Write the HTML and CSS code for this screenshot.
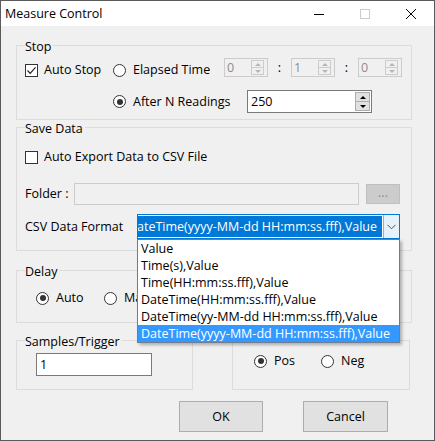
FILE: index.html
```html
<!DOCTYPE html>
<html>
<head>
<meta charset="utf-8">
<title>Measure Control</title>
<link rel="stylesheet" href="styles.css">
</head>
<body>
<div class="window">
  <div class="titlebar">
    <span class="title">Measure Control</span>
    <div class="caption-btns">
      <span class="cap"><svg width="10" height="10" viewBox="0 0 10 10"><path d="M0 5.5H10" stroke="#000" stroke-width="1"/></svg></span>
      <span class="cap"><svg width="10" height="10" viewBox="0 0 10 10"><rect x="0.5" y="0.5" width="9" height="9" fill="none" stroke="#cccccc"/></svg></span>
      <span class="cap"><svg width="10" height="10" viewBox="0 0 10 10"><path d="M0 0L10 10M10 0L0 10" stroke="#000" stroke-width="1"/></svg></span>
    </div>
  </div>

  <div class="client">
    <div class="group stop">
      <div class="legend">Stop</div>
      <div class="row r1">
        <label class="opt w-autostop"><span class="checkbox"><svg width="11" height="11" viewBox="0 0 11 11"><path d="M1.5 5.5L4.2 8.3L9.5 2.3" fill="none" stroke="#222" stroke-width="1.2"/></svg></span>Auto Stop</label>
        <label class="opt w-elapsed"><span class="radio"></span>Elapsed Time</label>
        <div class="spin disabled"><span class="val">0</span><span class="spin-btns"><i class="up"></i><i class="down"></i></span></div>
        <span class="colon">:</span>
        <div class="spin disabled"><span class="val">1</span><span class="spin-btns"><i class="up"></i><i class="down"></i></span></div>
        <span class="colon">:</span>
        <div class="spin disabled"><span class="val">0</span><span class="spin-btns"><i class="up"></i><i class="down"></i></span></div>
      </div>
      <div class="row r2">
        <label class="opt w-after"><span class="radio checked"></span>After N Readings</label>
        <div class="spin big"><span class="val">250</span><span class="spin-btns"><i class="up"></i><i class="down"></i></span></div>
      </div>
    </div>

    <div class="group save">
      <div class="legend">Save Data</div>
      <div class="row r-export">
        <label class="opt"><span class="checkbox empty"></span>Auto Export Data to CSV File</label>
      </div>
      <div class="row r-folder">
        <span class="lbl w-folder">Folder :</span>
        <div class="textbox disabled folder-box"></div>
        <div class="browse">...</div>
      </div>
      <div class="row r-csv">
        <span class="lbl w-csv">CSV Data Format</span>
        <div class="combo">
          <div class="combo-text"><span class="sel">DateTime(yyyy-MM-dd HH:mm:ss.fff),Value</span></div>
          <div class="combo-btn"><svg width="9" height="6" viewBox="0 0 9 6"><path d="M0.5 0.8L4.5 4.8L8.5 0.8" fill="none" stroke="#555" stroke-width="1"/></svg></div>
          <ul class="droplist">
            <li>Value</li>
            <li>Time(s),Value</li>
            <li>Time(HH:mm:ss.fff),Value</li>
            <li>DateTime(HH:mm:ss.fff),Value</li>
            <li>DateTime(yy-MM-dd HH:mm:ss.fff),Value</li>
            <li class="hl">DateTime(yyyy-MM-dd HH:mm:ss.fff),Value</li>
          </ul>
        </div>
      </div>
    </div>

    <div class="group delay">
      <div class="legend">Delay</div>
      <div class="row r-delay">
        <label class="opt w-auto"><span class="radio checked"></span>Auto</label>
        <label class="opt"><span class="radio"></span>Manual</label>
      </div>
    </div>

    <div class="bottom-groups">
      <div class="group samples">
        <div class="legend">Samples/Trigger</div>
        <div class="textbox samples-box">1</div>
      </div>
      <div class="group edge">
        <div class="row r-edge">
          <label class="opt w-pos"><span class="radio checked"></span>Pos</label>
          <label class="opt"><span class="radio"></span>Neg</label>
        </div>
      </div>
    </div>

    <div class="buttons">
      <button class="btn ok">OK</button>
      <button class="btn cancel">Cancel</button>
    </div>
  </div>
</div>
</body>
</html>
```

FILE: styles.css
```css
html, body {
  margin: 0;
  padding: 0;
  background: #f0f0f0;
}
body {
  font-family: "Open Sans", "Noto Sans", sans-serif;
  font-size: 12.5px;
  line-height: 16px;
  color: #000;
}
.window {
  width: 435px;
  height: 441px;
  box-sizing: border-box;
  border: 1px solid #5a5a5a;
  background: #f0f0f0;
  display: flex;
  flex-direction: column;
}
.titlebar {
  height: 25px;
  background: #fff;
  display: flex;
  align-items: center;
  padding-left: 4px;
  flex: none;
}
.title {
  line-height: 16px;
}
.caption-btns {
  margin-left: auto;
  display: flex;
}
.cap {
  width: 46px;
  height: 25px;
  display: flex;
  align-items: center;
  justify-content: center;
}
.client {
  padding: 19px 0 0 15px;
  position: relative;
}
.group {
  box-sizing: border-box;
  width: 396px;
  border: 1px solid #dcdcdc;
  padding: 0 0 0 8px;
}
.legend {
  margin-top: -7px;
  width: fit-content;
  padding: 0 2px 0 0;
  background: #f0f0f0;
  line-height: 16px;
}
.row {
  display: flex;
  align-items: center;
}
.opt {
  display: flex;
  align-items: center;
  white-space: nowrap;
}
.checkbox {
  box-sizing: border-box;
  width: 13px;
  height: 13px;
  border: 1px solid #333;
  background: #fff;
  margin-right: 6px;
  display: flex;
  align-items: center;
  justify-content: center;
  flex: none;
}
.checkbox.empty svg { display: none; }
.radio {
  box-sizing: border-box;
  width: 13px;
  height: 13px;
  border: 1px solid #333;
  border-radius: 50%;
  background: #fff;
  margin-right: 7px;
  position: relative;
  flex: none;
}
.radio.checked::after {
  content: "";
  position: absolute;
  left: 2.5px;
  top: 2.5px;
  width: 6px;
  height: 6px;
  border-radius: 50%;
  background: #333;
}

/* Stop */
.stop { padding-bottom: 6px; }
.r1 { margin-top: 3px; height: 24px; }
.w-autostop { width: 88px; }
.w-elapsed { width: 111px; }
.spin {
  box-sizing: border-box;
  border: 1px solid #7a7a7a;
  background: #fff;
  display: flex;
  align-items: stretch;
  position: relative;
}
.spin .val {
  flex: 1;
  padding-left: 2px;
  line-height: 16px;
  display: flex;
  align-items: center;
}
.spin.disabled {
  width: 44px;
  height: 19px;
  align-self: flex-start;
  border-color: #cccccc;
  background: #f0f0f0;
  color: #8d8d8d;
}
.spin-btns {
  display: flex;
  flex-direction: column;
  width: 13px;
  margin: 1px 3px 1px 0;
}
.spin-btns i {
  flex: 1;
  box-sizing: border-box;
  border: 1px solid #adadad;
  background: #e1e1e1;
  display: flex;
  align-items: center;
  justify-content: center;
}
.spin-btns i + i { border-top: none; }
.spin-btns i::after {
  content: "";
  width: 0;
  height: 0;
  border-left: 3px solid transparent;
  border-right: 3px solid transparent;
}
.spin-btns .up::after { border-bottom: 3px solid #000; }
.spin-btns .down::after { border-top: 3px solid #000; }
.spin.disabled .spin-btns i { border-color: #cccccc; background: #f0f0f0; }
.spin.disabled .spin-btns .up::after { border-bottom-color: #b5b5b5; }
.spin.disabled .spin-btns .down::after { border-top-color: #b5b5b5; }
.colon {
  width: 23px;
  text-align: center;
  align-self: flex-start;
  line-height: 19px;
}
.r2 { margin-top: 8px; height: 23px; padding-left: 88px; }
.w-after { width: 134px; }
.spin.big {
  width: 125px;
  height: 23px;
}
.spin.big .val { padding-left: 3px; }
.spin.big .spin-btns { width: 15px; margin: 1px 1px 1px 0; }

/* Save data */
.save { margin-top: 7px; padding-bottom: 11px; }
.r-export { margin-top: 12px; height: 16px; }
.r-folder { margin-top: 18px; height: 22px; }
.lbl { white-space: nowrap; }
.w-folder { width: 49px; }
.textbox {
  box-sizing: border-box;
  border: 1px solid #7a7a7a;
  background: #fff;
  padding-left: 3px;
  display: flex;
  align-items: center;
}
.textbox.disabled { border-color: #cccccc; background: #f0f0f0; }
.folder-box { width: 285px; height: 22px; }
.browse {
  box-sizing: border-box;
  width: 34px;
  height: 20px;
  margin-left: 7px;
  background: #cccccc;
  border: 1px solid #bfbfbf;
  color: #8a8a8a;
  text-align: center;
  line-height: 16px;
}
.r-csv { margin-top: 9px; height: 25px; }
.w-csv { width: 112px; }
.combo {
  box-sizing: border-box;
  width: 263px;
  height: 25px;
  border: 1px solid #0078d7;
  background: #fff;
  display: flex;
  position: relative;
}
.combo-text {
  flex: 1;
  min-width: 0;
  overflow: hidden;
  display: flex;
  justify-content: flex-end;
  padding: 1px 0 1px 1px;
}
.sel {
  background: #0078d7;
  color: #fff;
  white-space: nowrap;
  line-height: 21px;
  padding-right: 5px;
  flex: none;
}
.combo-btn {
  width: 16px;
  box-sizing: border-box;
  margin-left: 1px;
  background: #e5f1fb;
  border-left: 1px solid #7eb4ea;
  display: flex;
  align-items: center;
  justify-content: center;
}
.droplist {
  position: absolute;
  left: -1px;
  top: 24px;
  width: 263px;
  box-sizing: border-box;
  margin: 0;
  padding: 0;
  list-style: none;
  background: #fff;
  border: 1px solid #6f7c91;
  box-shadow: 2px 2px 3px rgba(0, 0, 0, 0.28);
  z-index: 5;
}
.droplist li {
  height: 17px;
  line-height: 17px;
  padding-left: 3px;
  white-space: nowrap;
}
.droplist li.hl {
  background: #3399ff;
  color: #fff;
}

/* Delay */
.delay { margin-top: 19px; padding-bottom: 16px; padding-left: 19px; }
.delay .legend { margin-left: -11px; }
.r-delay { margin-top: 10px; height: 16px; }
.w-auto { width: 68px; }

/* bottom */
.bottom-groups {
  display: flex;
  margin-top: 17px;
}
.samples {
  width: 177px;
  padding-left: 8px;
  padding-bottom: 13px;
}
.samples-box {
  margin: 3px 0 0 11px;
  width: 116px;
  height: 23px;
}
.edge {
  width: 178px;
  margin-left: 39px;
  padding-left: 21px;
}
.r-edge { margin-top: 12px; height: 16px; }
.w-pos { width: 67px; }

.buttons {
  display: flex;
  margin-top: 11px;
  padding-left: 163px;
}
.btn {
  box-sizing: border-box;
  height: 31px;
  background: #e1e1e1;
  border: 1px solid #adadad;
  font-family: inherit;
  font-size: 12.5px;
  color: #000;
  padding: 0;
}
.ok { width: 84px; }
.cancel { width: 85px; margin-left: 40px; }
```
